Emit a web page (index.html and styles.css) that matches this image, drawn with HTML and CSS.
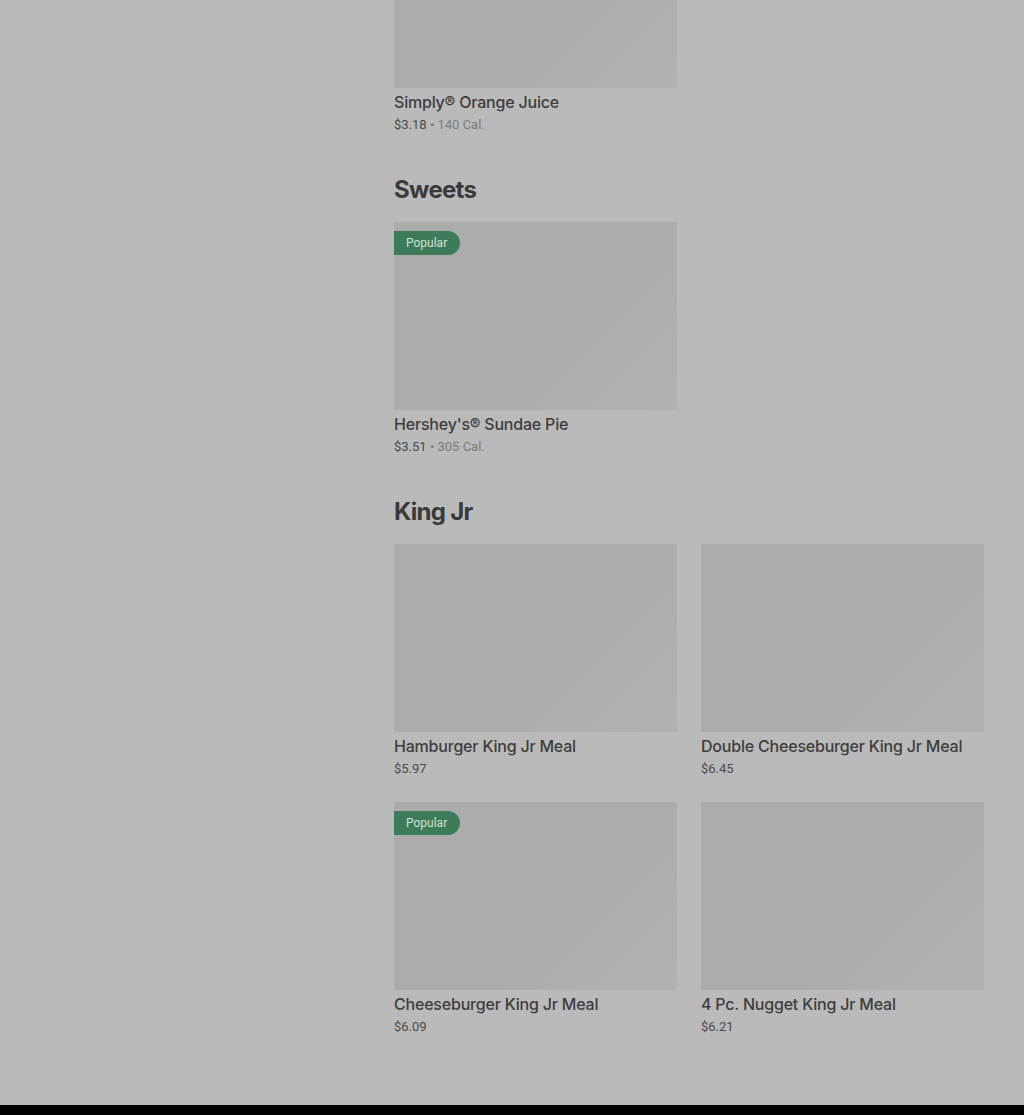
FILE: index.html
```html
<!DOCTYPE html>
<html lang="en">
<head>
    <meta charset="UTF-8">
    <meta name="viewport" content="width=device-width, initial-scale=1.0">
    <title>Menu</title>
    <link rel="stylesheet" href="styles.css">
</head>
<body>
    <div class="page">
        <aside class="sidebar"></aside>
        <main class="menu">
            <section class="section section-first">
                <div class="grid">
                    <div class="card">
                        <div class="thumb"></div>
                        <div class="card-title">Simply® Orange Juice</div>
                        <div class="card-meta"><span class="price">$3.18</span> • <span class="cal">140 Cal.</span></div>
                    </div>
                </div>
            </section>

            <section class="section">
                <h2>Sweets</h2>
                <div class="grid">
                    <div class="card">
                        <div class="thumb"><span class="badge">Popular</span></div>
                        <div class="card-title">Hershey's® Sundae Pie</div>
                        <div class="card-meta"><span class="price">$3.51</span> • <span class="cal">305 Cal.</span></div>
                    </div>
                </div>
            </section>

            <section class="section">
                <h2>King Jr</h2>
                <div class="grid">
                    <div class="card">
                        <div class="thumb"></div>
                        <div class="card-title">Hamburger King Jr Meal</div>
                        <div class="card-meta"><span class="price">$5.97</span></div>
                    </div>
                    <div class="card">
                        <div class="thumb"></div>
                        <div class="card-title">Double Cheeseburger King Jr Meal</div>
                        <div class="card-meta"><span class="price">$6.45</span></div>
                    </div>
                    <div class="card">
                        <div class="thumb"><span class="badge">Popular</span></div>
                        <div class="card-title">Cheeseburger King Jr Meal</div>
                        <div class="card-meta"><span class="price">$6.09</span></div>
                    </div>
                    <div class="card">
                        <div class="thumb"></div>
                        <div class="card-title">4 Pc. Nugget King Jr Meal</div>
                        <div class="card-meta"><span class="price">$6.21</span></div>
                    </div>
                </div>
            </section>
        </main>
    </div>
    <footer class="footer"></footer>
</body>
</html>
```

FILE: styles.css
```css
body {
    margin: 0;
    font-family: 'Roboto', 'Liberation Sans', sans-serif;
    background-color: #bababa;
    color: #3c3c3c;
    overflow: hidden;
}
.page {
    display: flex;
    gap: 24px;
    padding-right: 40px;
    padding-bottom: 69px;
}
.sidebar {
    width: 370px;
    flex-shrink: 0;
}
.menu {
    flex: 1;
    margin-top: -100px;
}
.section {
    margin-top: 40px;
}
.section-first {
    margin-top: 0;
}
.section h2 {
    margin: 0 0 16px;
    font-family: 'Inter', 'Roboto', sans-serif;
    font-size: 24px;
    line-height: 32px;
    font-weight: 700;
    color: #3a3a3a;
    letter-spacing: -0.7px;
}
.grid {
    display: grid;
    grid-template-columns: 283px 283px;
    column-gap: 24px;
    row-gap: 24px;
}
.thumb {
    position: relative;
    height: 188px;
    background: linear-gradient(135deg, #acacac 0%, #acacac 55%, #b1b1b1 100%);
}
.badge {
    position: absolute;
    top: 9px;
    left: 0;
    height: 24px;
    line-height: 24px;
    padding: 0 13px 0 12px;
    background-color: #3e7b59;
    color: #cfe2d5;
    font-size: 12px;
    border-radius: 0 12px 12px 0;
}
.card-title {
    margin-top: 4px;
    font-family: 'Inter', 'Roboto', sans-serif;
    font-size: 16px;
    line-height: 20px;
    font-weight: 500;
    color: #3d3d3d;
    letter-spacing: -0.2px;
}
.card-meta {
    margin-top: 4px;
    font-size: 13px;
    line-height: 18px;
    color: #777;
}
.price {
    color: #4a4a4a;
}
.cal {
    color: #7a7a7a;
}
.footer {
    height: 200px;
    background-color: #000;
}
```
